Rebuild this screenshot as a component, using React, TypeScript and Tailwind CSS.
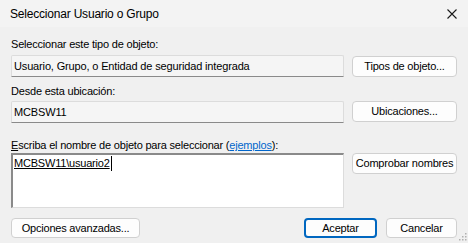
import React from 'react';

const font = { fontFamily: '"Liberation Sans", Arial, sans-serif' };

const Btn = ({ children, primary = false, className = '' }: { children: React.ReactNode; primary?: boolean; className?: string }) => (
  <button
    className={`h-[21px] rounded-[4px] bg-[#fdfdfd] text-[11px] tracking-[-0.2px] whitespace-nowrap text-black leading-none ${
      primary ? 'border-2 border-[#0067c0]' : 'border border-[#d0d0d0]'
    } ${className}`}>
    {children}
  </button>
);

const ReadOnlyBox = ({ text }: { text: string }) => (
  <div className="h-[22px] w-[333px] flex items-center pl-[2px] bg-[#f5f5f5] border border-[#dcdcdc] border-b-[#8a8a8a] rounded-t-[2px] text-[11px] tracking-[-0.15px] text-black">
    {text}
  </div>
);

export default function App() {
  return (
    <div className="w-[468px] h-[243px] bg-[#f0f0f0] relative overflow-hidden select-none" style={font}>
      {/* barra de título */}
      <div className="h-[27px] bg-[#f3f3f3] flex items-center justify-between pl-[10px] pr-[7px]">
        <span className="text-[12px] tracking-[-0.2px] text-black">Seleccionar Usuario o Grupo</span>
        <svg width="12" height="12" viewBox="0 0 12 12" className="mr-[3px]">
          <path d="M1.5 1.5 L10.5 10.5 M10.5 1.5 L1.5 10.5" stroke="#1a1a1a" strokeWidth="1.1" />
        </svg>
      </div>

      <div className="px-[11px] flex flex-col text-[11px] tracking-[-0.2px]">
        <div className="mt-[9px] h-[16px] leading-[16px]">Seleccionar este tipo de objeto:</div>
        <div className="mt-[3px] flex gap-[8px]">
          <ReadOnlyBox text="Usuario, Grupo, o Entidad de seguridad integrada" />
          <Btn className="w-[105px] mt-[1px]">Tipos de objeto...</Btn>
        </div>

        <div className="mt-[6px] h-[16px] leading-[16px]">Desde esta ubicación:</div>
        <div className="mt-[2px] flex gap-[8px]">
          <ReadOnlyBox text="MCBSW11" />
          <Btn className="w-[105px]">Ubicaciones...</Btn>
        </div>

        <div className="mt-[14px] h-[16px] leading-[16px]">
          <span className="underline">E</span>scriba el nombre de objeto para seleccionar (
          <span className="text-[#0066cc] underline">ejemplos</span>):
        </div>
        <div className="flex gap-[8px]">
          <div className="h-[55px] w-[333px] bg-white border-t-2 border-l-2 border-t-[#8a8a8a] border-l-[#8a8a8a] border-r border-b border-r-[#dcdcdc] border-b-[#dcdcdc] pl-[1px]">
            <span className="inline-block leading-[15px] underline border-r border-black pr-[1px]">MCBSW11\usuario2</span>
          </div>
          <Btn className="w-[105px]">Comprobar nombres</Btn>
        </div>

        <div className="mt-[10px] flex items-center">
          <Btn className="w-[129px] !h-[20px]">Opciones avanzadas...</Btn>
          <div className="flex-1" />
          <Btn primary className="w-[73px] !h-[20px]">Aceptar</Btn>
          <Btn className="w-[71px] ml-[9px] !h-[20px]">Cancelar</Btn>
        </div>
      </div>

      {/* agarre de redimensión */}
      <svg width="8" height="8" viewBox="0 0 8 8" className="absolute right-[1px] bottom-[2px]">
        <rect x="6" y="0" width="1.5" height="1.5" fill="#b0b0b0" />
        <rect x="3" y="3" width="1.5" height="1.5" fill="#b0b0b0" />
        <rect x="6" y="3" width="1.5" height="1.5" fill="#b0b0b0" />
        <rect x="0" y="6" width="1.5" height="1.5" fill="#b0b0b0" />
        <rect x="3" y="6" width="1.5" height="1.5" fill="#b0b0b0" />
        <rect x="6" y="6" width="1.5" height="1.5" fill="#b0b0b0" />
      </svg>
    </div>
  );
}
